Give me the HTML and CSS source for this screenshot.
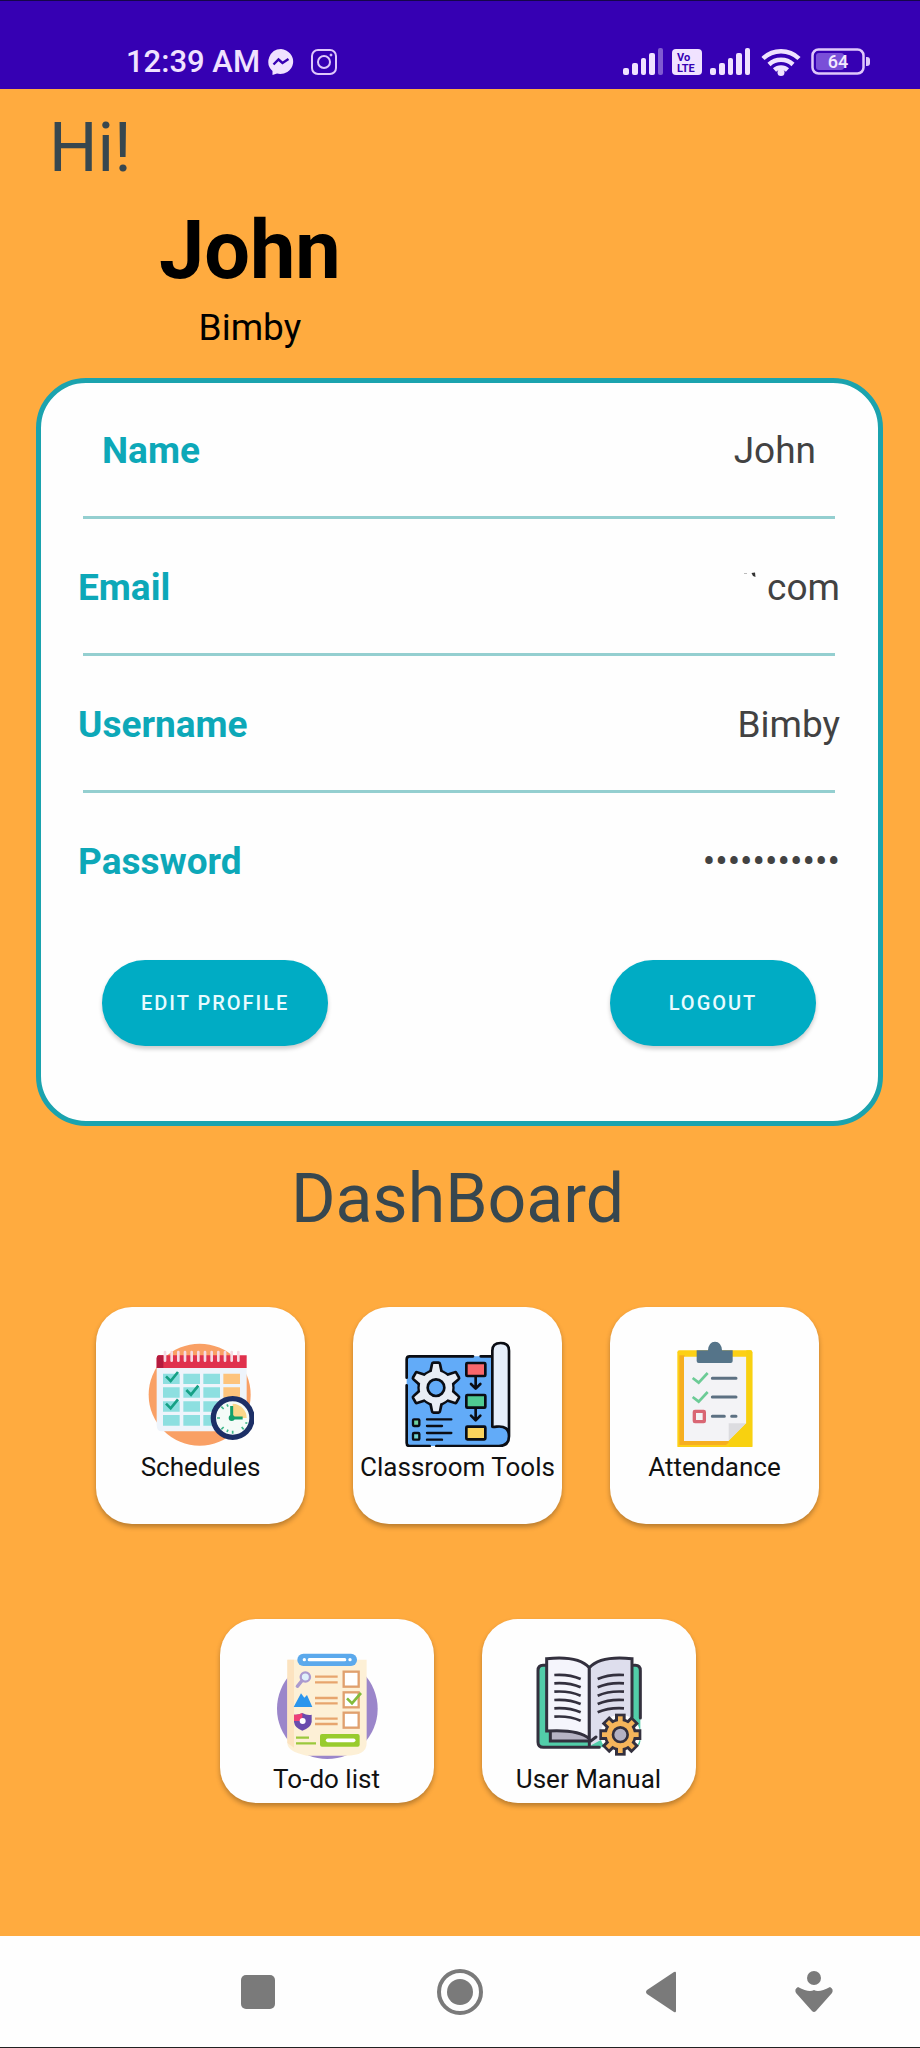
FILE: index.html
```html
<!DOCTYPE html>
<html lang="en">
<head>
<meta charset="utf-8">
<meta name="viewport" content="width=device-width, initial-scale=1">
<title>DashBoard</title>
<link rel="stylesheet" href="styles.css">
</head>
<body>
<header class="status">
  <div class="status-group">
    <time class="clock">12:39 AM</time>
    <svg class="notice" viewBox="0 0 26 26" width="26" height="26" aria-label="Messenger"><path fill="#f0e2ff" d="M13 0a13 12.500 0 1 1-4 24.600L4.500 26v-4A12.700 12.700 0 0 1 13 0z"/><path d="M5.500 15.500l5-5 4 3.500 6-4" fill="none" stroke="#3600b3" stroke-width="2.400"/></svg>
    <svg class="notice" viewBox="0 0 26 26" width="26" height="26" aria-label="Instagram" fill="none" stroke="#dfc8fb" stroke-width="2"><rect x="1" y="1" width="24" height="24" rx="6"/><circle cx="13" cy="13" r="6"/><circle cx="20" cy="6" r="1" fill="#dfc8fb" stroke-width="1"/></svg>
  </div>
  <div class="status-group status-right">
    <svg viewBox="0 0 41 27" width="41" height="27" fill="#f0e2ff" aria-label="Signal"><rect x="0" y="20" width="6" height="7" rx="2"/><rect x="9" y="15" width="6" height="12" rx="2"/><rect x="18" y="10" width="5" height="17" rx="2"/><rect x="26" y="5" width="6" height="22" rx="2"/><rect x="35" y="0" width="5" height="27" rx="2" opacity=".4"/></svg>
    <svg viewBox="0 0 30 26" width="30" height="26" aria-label="VoLTE"><rect width="30" height="26" rx="4" fill="#f0e2ff"/><g class="volte" fill="#3600b3"><text x="5" y="12">Vo</text><text x="5" y="23">LTE</text></g></svg>
    <svg viewBox="0 0 41 27" width="41" height="27" fill="#f0e2ff" aria-label="Signal"><rect x="0" y="20" width="6" height="7" rx="2"/><rect x="9" y="15" width="6" height="12" rx="2"/><rect x="18" y="10" width="5" height="17" rx="2"/><rect x="26" y="5" width="6" height="22" rx="2"/><rect x="35" y="0" width="5" height="27" rx="2"/></svg>
    <svg class="wifi" viewBox="0 0 40 29" width="40" height="29" fill="none" stroke="#f0e2ff" stroke-width="4.500" aria-label="Wi-Fi"><path d="M2 11.500a26 26 0 0 1 36 0M8 17.500a17.500 17.500 0 0 1 24 0M13.500 23a9.500 9.500 0 0 1 13 0"/><circle cx="20" cy="25.500" r="3.500" fill="#f0e2ff" stroke="none"/></svg>
    <svg viewBox="0 0 60 27" width="60" height="27" aria-label="Battery"><rect x="1.500" y="1.500" width="51" height="24" rx="6" fill="none" stroke="#dfc8fb" stroke-width="2.500"/><rect x="5" y="5" width="28" height="17" rx="3" fill="#7a4fd8"/><path d="M55 9h1a3 3 0 0 1 3 3v3a3 3 0 0 1-3 3h-1z" fill="#dfc8fb"/><text class="charge" x="27" y="20" text-anchor="middle" fill="#f4eaff">64</text></svg>
  </div>
</header>

<main class="screen">
  <p class="greeting">Hi!</p>
  <div class="identity">
    <h1 class="first-name">John</h1>
    <p class="handle">Bimby</p>
  </div>

  <section class="card">
    <dl class="fields">
      <div class="field field-inset"><dt>Name</dt><dd>John</dd></div>
      <div class="field"><dt>Email</dt><dd><svg class="speck" viewBox="0 0 12 26" width="12" height="26" aria-hidden="true"><path d="M0 1.500h3" stroke="#bbb"/><path d="M7.500 1l3.500-.5.500 4.500-2.500-1z" fill="#333"/></svg>com</dd></div>
      <div class="field"><dt>Username</dt><dd>Bimby</dd></div>
      <div class="field"><dt>Password</dt><dd>•••••••••••</dd></div>
    </dl>
    <div class="actions">
      <button class="pill" type="button">EDIT PROFILE</button>
      <button class="pill" type="button">LOGOUT</button>
    </div>
  </section>

  <h2 class="section-title">DashBoard</h2>

  <div class="tiles">
    <button class="tile" type="button">
      <svg class="tile-icon" viewBox="52 33 318 318" aria-hidden="true">
        <circle cx="207" cy="194" r="153" fill="#f9a065"/>
        <path d="M78 112h270v192H94q-16 0-16-20z" fill="#eef4fb"/>
        <path d="M84 76h264v38H78V84q0-8 6-8z" fill="#e0314d"/><path d="M84 76h14v38H78V84q0-8 6-8z" fill="#b51b3e"/>
        <path d="M103 66v26M123 66v26M143 66v26M163 66v26M183 66v26M203 66v26M223 66v26M243 66v26M263 66v26M283 66v26M303 66v26M323 66v26" stroke="#f6d9e3" stroke-width="8" stroke-linecap="round"/>
        <path d="M97 131h50v31H97zM158 131h50v31h-50zM218 131h50v31h-50zM97 172h50v31H97zM158 172h50v31h-50zM218 172h50v31h-50zM97 214h50v31H97zM158 214h50v31h-50zM218 214h50v31h-50zM97 255h50v32H97zM158 255h50v32h-50zM218 255h50v32h-50z" fill="#8ddfe0"/>
        <path d="M278 131h50v31h-50zM278 172h50v31h-50z" fill="#fdc37c"/>
        <path d="M106 139l14 14 22-27M167 180l14 14 22-27M106 221l14 14 22-27" fill="none" stroke="#16a085" stroke-width="8"/>
        <circle cx="306" cy="264" r="58" fill="#f4fbf8" stroke="#1c2f66" stroke-width="16"/>
        <path d="M306 264v-43a43 43 0 0 1 42 43z" fill="#fbd78a"/>
        <path d="M306 302v9M268 264h-9M279 237l-7-7M279 291l-7 7M333 291l6 7M344 278l6 2M292 230l-3-7M292 299l-3 7" stroke="#3fb88b" stroke-width="5"/>
        <path d="M303 228v36h33" fill="none" stroke="#15a06c" stroke-width="9"/><circle cx="303" cy="264" r="9" fill="#15a06c"/>
      </svg>
      <span class="caption">Schedules</span>
    </button>
    <button class="tile" type="button">
      <svg class="tile-icon" viewBox="62 33 318 318" aria-hidden="true">
        <path d="M67 88q0-9 9-9h248v210h50v30q0 29-30 29H76q-9 0-9-9z" fill="#62abf8"/>
        <path d="M324 289V62q0-23 25-23t25 23v234q-10-8-25-7z" fill="#e6effb"/>
        <g fill="none" stroke="#0a0d14" stroke-width="8" stroke-linecap="round">
          <path d="M67 143V88q0-9 9-9h190M289 79h35M67 166v173q0 9 9 9h60M156 348h188q30 0 30-29V62q0-23-25-23t-25 23v228q0 2 13 0 37-4 37 29"/>
        </g>
        <g fill="#0a0d14"><circle cx="155" cy="173" r="56"/><path id="lobe" d="M132 134l7-32q1-8 8-8h16q7 0 8 8l7 32z"/><use href="#lobe" transform="rotate(60 155 173)"/><use href="#lobe" transform="rotate(120 155 173)"/><use href="#lobe" transform="rotate(180 155 173)"/><use href="#lobe" transform="rotate(240 155 173)"/><use href="#lobe" transform="rotate(300 155 173)"/></g>
        <g fill="#e8edf5"><circle cx="155" cy="173" r="49"/><path id="core" d="M141 132l6-30h16l6 30z"/><use href="#core" transform="rotate(60 155 173)"/><use href="#core" transform="rotate(120 155 173)"/><use href="#core" transform="rotate(180 155 173)"/><use href="#core" transform="rotate(240 155 173)"/><use href="#core" transform="rotate(300 155 173)"/></g>
        <circle cx="155" cy="173" r="25" fill="#62abf8" stroke="#0a0d14" stroke-width="8"/>
        <g stroke="#0a0d14" stroke-width="8" stroke-linecap="round" stroke-linejoin="round">
          <rect x="246" y="99" width="57" height="39" rx="3" fill="#f8676c"/><rect x="246" y="195" width="57" height="38" rx="3" fill="#4fcb92"/><rect x="246" y="290" width="57" height="38" rx="3" fill="#fbd35d"/>
          <path d="M274 141v34M260 162l14 14 14-14M274 236v34M260 257l14 14 14-14" fill="none"/>
          <path d="M128 268h73M128 288h45M128 309h73M128 329h45" stroke-width="7"/>
          <rect x="86" y="268" width="19" height="20" rx="3" fill="#6ed1a0" stroke-width="7"/><rect x="86" y="309" width="19" height="20" rx="3" fill="#6ed1d0" stroke-width="7"/>
        </g>
      </svg>
      <span class="caption">Classroom Tools</span>
    </button>
    <button class="tile" type="button">
      <svg class="tile-icon" viewBox="38 33 318 318" aria-hidden="true">
        <rect x="84" y="61" width="225" height="293" rx="6" fill="#fdd016"/>
        <path d="M90 76h16v257h138l-14 12H90z" fill="#f6ae20"/>
        <path d="M104 80h187v200l-53 53H104z" fill="#f3f3f6"/>
        <path d="M238 333v-53h53z" fill="#dcdce0"/>
        <path d="M291 61h12q6 0 6 6v281q0 6-6 6H238v-21l53-53z" fill="#f8d110"/>
        <path d="M142 61h34q2-26 21-26t21 26h32v32q0 6-6 6h-96q-6 0-6-6z" fill="#557489"/>
        <path d="M130 144l18 14 27-29M130 201l18 14 27-29" fill="none" stroke="#6ccb96" stroke-width="8"/>
        <rect x="135" y="244" width="30" height="31" rx="2" fill="none" stroke="#d96674" stroke-width="10"/>
        <path d="M189 145h71M189 201h71M189 259h36M247 259h13" stroke="#5c7082" stroke-width="9" stroke-linecap="round"/>
      </svg>
      <span class="caption">Attendance</span>
    </button>
  </div>

  <div class="tiles tiles-short">
    <button class="tile" type="button">
      <svg class="tile-icon" viewBox="42 40 318 318" aria-hidden="true">
        <circle cx="202" cy="207" r="151" fill="#9b86ca"/>
        <path d="M82 60h238v250q0 38-62 38H140q-58-12-58-38z" fill="#fdf0d6"/><path d="M82 60h20v264l-20-14z" fill="#fce3c0"/>
        <rect x="112" y="42" width="179" height="37" rx="18" fill="#5ba9ec"/><path d="M148 60h106" stroke="#fff" stroke-width="10" stroke-linecap="round"/><circle cx="133" cy="60" r="5" fill="#fff"/><circle cx="270" cy="60" r="5" fill="#fff"/>
        <circle cx="136" cy="112" r="14" fill="#dff0fb" stroke="#ab9acf" stroke-width="7"/><path d="M126 123l-14 17" stroke="#ab9acf" stroke-width="10" stroke-linecap="round"/>
        <path d="M101 202l22-41 10 13 8-8 16 36z" fill="#2b96ed"/>
        <path d="M127 220q15 8 28 5v22q-3 18-28 26-23-8-25-26v-22q13 2 25-5z" fill="#6a4bad"/><path d="M102 225q12 2 25-5v24h-25z" fill="#ee3f77"/><circle cx="128" cy="244" r="9" fill="#fff"/>
        <path d="M165 111h68M165 128h68M165 175h68M165 191h68M165 237h68M165 253h68" stroke="#e7a56e" stroke-width="7"/>
        <g fill="#fff" stroke="#e0a06e" stroke-width="7"><rect x="251" y="96" width="45" height="45"/><rect x="251" y="158" width="45" height="45"/><rect x="251" y="219" width="45" height="45"/></g>
        <path d="M261 176l15 15 27-31" fill="none" stroke="#83bb3c" stroke-width="8"/>
        <path d="M108 294h39M108 311h60" stroke="#9bc83d" stroke-width="7"/><rect x="180" y="283" width="119" height="38" rx="6" fill="#98cb2e"/><path d="M203 302h78" stroke="#fff" stroke-width="11" stroke-linecap="round"/>
      </svg>
      <span class="caption">To-do list</span>
    </button>
    <button class="tile" type="button">
      <svg class="tile-icon" viewBox="49 40 318 318" aria-hidden="true">
        <rect x="55" y="77" width="307" height="246" rx="18" fill="#52cda9"/>
        <path d="M78 77H70q-15 0-15 16v214q0 16 16 16h168M342 77h5q15 0 15 16v142" fill="none" stroke="#33303e" stroke-width="9" stroke-linecap="round"/>
        <path d="M92 270v34h118v-28z" fill="#b6b3c4" stroke="#33303e" stroke-width="9"/>
        <path d="M81 57q95-10 128 27v213q-33-29-128-23z" fill="#f5f5fc" stroke="#33303e" stroke-width="9"/>
        <path d="M337 57q-95-10-128 27v236l40-22h88z" fill="#dedeed"/><path d="M337 232V57q-95-10-128 27v236M211 306l18-14" fill="none" stroke="#33303e" stroke-width="9" stroke-linecap="round"/>
        <path d="M104 106q45-3 79 12M104 131q45-3 79 12M104 156q45-3 79 12M104 181q45-3 79 12M104 206q45-3 79 12M104 231q45-3 79 12M313 106q-45-3-79 12M313 131q-45-3-79 12M313 156q-45-3-79 12M313 181q-45-3-79 12M313 206q-45-3-79 12" fill="none" stroke="#33303e" stroke-width="8"/>
        <circle cx="302" cy="285" r="60" fill="#fff"/>
        <g fill="#33303e"><circle cx="302" cy="285" r="49"/><path id="cog" d="M286 222h32v126h-32z"/><use href="#cog" transform="rotate(45 302 285)"/><use href="#cog" transform="rotate(90 302 285)"/><use href="#cog" transform="rotate(135 302 285)"/></g>
        <g fill="#f5b55b"><circle cx="302" cy="285" r="41"/><path id="cog-in" d="M295 230h14v110h-14z"/><use href="#cog-in" transform="rotate(45 302 285)"/><use href="#cog-in" transform="rotate(90 302 285)"/><use href="#cog-in" transform="rotate(135 302 285)"/></g>
        <circle cx="302" cy="285" r="22" fill="#b3b1c3" stroke="#33303e" stroke-width="8"/>
      </svg>
      <span class="caption">User Manual</span>
    </button>
  </div>
</main>

<nav class="navbar" aria-label="System">
  <button class="nav-key" type="button" aria-label="Recent apps"><svg viewBox="0 0 48 48" width="48" height="48"><rect x="7" y="7" width="34" height="34" rx="5"/></svg></button>
  <button class="nav-key" type="button" aria-label="Home"><svg viewBox="0 0 48 48" width="48" height="48"><circle cx="24" cy="24" r="21" fill="none" stroke="#7a7a7a" stroke-width="4"/><circle cx="24" cy="24" r="13"/></svg></button>
  <button class="nav-key" type="button" aria-label="Back"><svg viewBox="0 0 48 48" width="48" height="48"><path d="M38 5v38q0 2-2 1L9 26q-2-2 0-4L36 4q2-1 2 1z"/></svg></button>
  <button class="nav-key" type="button" aria-label="Accessibility"><svg viewBox="0 0 48 48" width="48" height="48"><circle cx="24" cy="10" r="7"/><path d="M8 19q11 6 16 3 5 3 16-3 4 2 2 6L26 43q-2 2-4 0L6 25q-2-4 2-6z"/></svg></button>
</nav>
</body>
</html>
```

FILE: styles.css
```css
* {
  box-sizing: border-box;
}

body {
  margin: 0;
  min-height: 100vh;
  display: flex;
  flex-direction: column;
  background: #ffab3f;
  font-family: Roboto, "Liberation Sans", sans-serif;
  color: #000;
}

p, h1, h2, dl, dd {
  margin: 0;
}

svg {
  display: block;
}

button {
  border: 0;
  font-family: inherit;
  cursor: pointer;
}

/* Status bar */
.status {
  display: flex;
  justify-content: space-between;
  align-items: center;
  padding: 41px 49px 8px 126px;
  background: #3600b3;
  border-top: 1px solid #15064a;
}

.status-group {
  display: flex;
  align-items: center;
  gap: 8px;
}

.clock {
  font-size: 31px;
  line-height: 39px;
  font-weight: 500;
  color: #f0e2ff;
}

.notice + .notice {
  margin-left: 9px;
}

.volte {
  font-size: 11px;
  font-weight: 700;
}

.wifi {
  margin: 0 2px;
}

.charge {
  font-size: 18px;
  font-weight: 500;
}

/* Profile */
.screen {
  flex: 1;
  padding: 19px 37px 64px 36px;
}

.greeting,
.section-title {
  font-size: 68px;
  line-height: 80px;
  font-weight: 400;
  color: #37474f;
}

.greeting {
  padding-left: 13px;
}

.identity {
  width: fit-content;
  margin: 15px 0 26px 123px;
  text-align: center;
}

.first-name {
  font-size: 81px;
  line-height: 96px;
  font-weight: 700;
}

.handle {
  margin-top: 5px;
  font-size: 37px;
  line-height: 48px;
}

.card {
  padding: 43px 38px 75px 37px;
  border: 5px solid #1ba3ae;
  border-radius: 50px;
  background: #fefefe;
}

.field {
  display: flex;
  justify-content: space-between;
  font-size: 37px;
  line-height: 50px;
}

.field + .field {
  padding-top: 44px;
}

.field:not(:last-child) {
  padding-bottom: 43px;
  background: linear-gradient(#94cfd0, #94cfd0) center bottom / calc(100% - 10px) 3px no-repeat;
}

.field dt {
  font-weight: 700;
  color: #0da8b8;
}

.field dd {
  display: flex;
  color: #424242;
}

.field-inset dt {
  padding-left: 24px;
}

.field-inset dd {
  padding-right: 24px;
}

.speck {
  margin: 9px 11px 0 0;
}

.actions {
  display: flex;
  justify-content: space-between;
  margin-top: 73px;
  padding: 0 24px;
}

.pill {
  min-width: 206px;
  height: 86px;
  padding: 0 39px;
  border-radius: 43px;
  background: #00acc4;
  box-shadow: 0 3px 4px rgba(0, 0, 0, 0.2);
  color: #e8fbff;
  font-size: 20px;
  font-weight: 500;
  letter-spacing: 2px;
}

/* Dashboard */
.section-title {
  margin: 33px 0 68px;
  padding-right: 4px;
  text-align: center;
}

.tiles {
  display: flex;
  justify-content: center;
  gap: 48px;
  padding-right: 4px;
}

.tile {
  display: flex;
  flex-direction: column;
  align-items: center;
  gap: 4px;
  width: 209px;
  padding: 34px 0 41px;
  border-radius: 36px;
  background: #fefefe;
  box-shadow: 0 3px 5px rgba(0, 0, 0, 0.28);
  color: #111;
}

.tile-icon {
  width: 106px;
  height: 106px;
}

.caption {
  font-size: 26px;
  line-height: 32px;
  white-space: nowrap;
}

.tiles-short {
  margin-top: 95px;
}

.tiles-short .tile {
  width: 214px;
  padding-bottom: 8px;
}

/* System navigation */
.navbar {
  display: grid;
  grid-template-columns: 2fr 2fr 2fr 1fr;
  padding: 32px 6% 31px 17%;
  background: #fefefe;
  border-bottom: 1px solid #222;
}

.nav-key {
  display: flex;
  justify-content: center;
  padding: 0;
  background: none;
}

.nav-key svg {
  fill: #7a7a7a;
}
```
